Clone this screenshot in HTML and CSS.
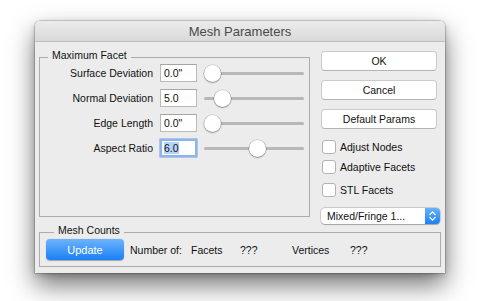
FILE: index.html
```html
<!DOCTYPE html>
<html>
<head>
<meta charset="utf-8">
<link rel="stylesheet" href="styles.css">
</head>
<body>
<div class="window">
  <div class="titlebar">Mesh Parameters</div>
  <div class="content">
    <div class="top">
      <fieldset class="group facet">
        <legend>Maximum Facet</legend>
        <div class="rows">
          <div class="lbl">Surface Deviation</div>
          <div class="field">0.0"</div>
          <div class="slider"><div class="track"></div><div class="thumb" style="left:-0.5px"></div></div>

          <div class="lbl">Normal Deviation</div>
          <div class="field">5.0</div>
          <div class="slider"><div class="track"></div><div class="thumb" style="left:9.5px"></div></div>

          <div class="lbl">Edge Length</div>
          <div class="field">0.0"</div>
          <div class="slider"><div class="track"></div><div class="thumb" style="left:-0.5px"></div></div>

          <div class="lbl">Aspect Ratio</div>
          <div class="field focus"><span class="sel">6.0</span></div>
          <div class="slider"><div class="track"></div><div class="thumb" style="left:44.5px"></div></div>
        </div>
      </fieldset>
      <div class="side">
        <button class="btn">OK</button>
        <button class="btn">Cancel</button>
        <button class="btn last">Default Params</button>
        <label class="check c1"><span class="box"></span>Adjust Nodes</label>
        <label class="check c2"><span class="box"></span>Adaptive Facets</label>
        <label class="check c3"><span class="box"></span>STL Facets</label>
        <div class="popup">
          <span class="val">Mixed/Fringe 1...</span>
          <span class="stepper">
            <svg width="9" height="12" viewBox="0 0 9 12"><path d="M1.8 4.6 L4.5 1.9 L7.2 4.6 M1.8 7.4 L4.5 10.1 L7.2 7.4" fill="none" stroke="#fff" stroke-width="1.3" stroke-linecap="round" stroke-linejoin="round"/></svg>
          </span>
        </div>
      </div>
    </div>
    <fieldset class="group counts">
      <legend>Mesh Counts</legend>
      <div class="countrow">
        <div><button class="update">Update</button></div>
        <div>Number of:</div>
        <div>Facets</div>
        <div>???</div>
        <div>Vertices</div>
        <div>???</div>
      </div>
    </fieldset>
  </div>
</div>
</body>
</html>
```
FILE: styles.css
```css
html, body {
  margin: 0;
  background: #fff;
}
body {
  box-sizing: border-box;
  min-height: 301px;
  font-family: "Liberation Sans", Arial, sans-serif;
  font-size: 10.5px;
  color: #111;
  padding-top: 21px;
}
.window {
  margin: 0 0 0 35px;
  width: 410px;
  background: #ececec;
  border-radius: 5px 5px 0 0;
  box-shadow: 0 0 0 0.5px rgba(0,0,0,0.3), 0 12px 26px rgba(0,0,0,0.55), 0 2px 6px rgba(0,0,0,0.2);
}
.titlebar {
  height: 20px;
  border-bottom: 1px solid #bdbdbd;
  border-radius: 5px 5px 0 0;
  background: linear-gradient(#ececec, #d9d9d9);
  text-align: center;
  font-size: 13px;
  line-height: 21px;
  color: #4a4a4a;
}
.content {
  padding: 7px 4px 6px;
}
.top {
  display: flex;
  align-items: flex-start;
}
fieldset.group {
  margin: 0;
  border: 1px solid #acacac;
  min-width: 0;
}
fieldset.group legend {
  font-size: 10.5px;
  line-height: 12px;
  padding: 0 4px 5px;
  margin-left: 8px;
  color: #111;
}
.facet {
  margin-left: 1px;
  width: 271px;
  box-sizing: border-box;
  padding: 0 5px 59px 0;
}
.rows {
  display: grid;
  grid-template-columns: 113px 37px 100px;
  grid-auto-rows: 18px;
  column-gap: 7px;
  row-gap: 7px;
  margin-top: -2px;
}
.lbl {
  text-align: right;
  line-height: 18px;
}
.field {
  height: 18px;
  box-sizing: border-box;
  border: 1px solid #b9b9b9;
  border-top-color: #a5a5a5;
  background: #fff;
  padding-left: 3px;
  line-height: 16px;
}
.field.focus {
  border: 2px solid #8db5ec;
  padding-left: 2px;
  line-height: 14px;
  box-shadow: 0 0 0 0.5px #6f9fe2;
}
.sel {
  background: #b3d4fc;
}
.slider {
  position: relative;
  height: 18px;
}
.track {
  margin-top: 7.5px;
  height: 3px;
  border-radius: 2px;
  background: #b8b8b8;
}
.thumb {
  position: absolute;
  top: 0.5px;
  width: 17px;
  height: 17px;
  border-radius: 50%;
  background: #fff;
  box-shadow: 0 0 0 0.5px rgba(0,0,0,0.28), 0 1px 1.5px rgba(0,0,0,0.3);
}
.side {
  width: 119px;
  margin: 2px 0 0 11px;
  display: flex;
  flex-direction: column;
}
.btn {
  width: 116px;
  height: 20px;
  box-sizing: border-box;
  padding: 0;
  margin: 0 0 9px 0;
  background: #fff;
  border: 1px solid #cacaca;
  border-bottom-color: #b3b3b3;
  border-radius: 4px;
  font-family: inherit;
  font-size: 10.5px;
  color: #111;
  line-height: 18px;
  text-align: center;
}
.btn.last {
  margin-bottom: 0;
}
.check {
  display: flex;
  align-items: center;
  gap: 4px;
  height: 14px;
  margin-left: 1px;
}
.c1 { margin-top: 11px; }
.c2 { margin-top: 6px; }
.c3 { margin-top: 9px; }
.box {
  width: 14px;
  height: 14px;
  box-sizing: border-box;
  border: 1px solid #b3b3b3;
  border-radius: 3px;
  background: #fff;
}
.popup {
  margin-top: 11px;
  width: 119px;
  height: 16px;
  display: flex;
  border-radius: 4px;
  background: #fff;
  box-shadow: 0 0 0 0.5px rgba(0,0,0,0.25), 0 0.5px 1px rgba(0,0,0,0.2);
}
.popup .val {
  flex: 1;
  padding-left: 6px;
  line-height: 16px;
  white-space: nowrap;
}
.stepper {
  width: 15px;
  border-radius: 0 4px 4px 0;
  background: linear-gradient(#6ab1fb, #1c80f5);
  display: flex;
  align-items: center;
  justify-content: center;
}
.counts {
  margin: 0 1px 0 0;
  padding: 0 0 6px 6px;
}
.countrow {
  display: grid;
  grid-template-columns: 84px 61px 49px 52px 58px auto;
  align-items: center;
  margin-top: -2px;
  height: 21px;
}
.update {
  display: block;
  width: 78px;
  height: 21px;
  padding: 0;
  border: none;
  border-radius: 4px;
  background: linear-gradient(#6cb4fb, #1b7ff6);
  color: #fff;
  font-family: inherit;
  font-size: 11px;
  box-shadow: 0 0.5px 1px rgba(0,0,0,0.3);
}
```
